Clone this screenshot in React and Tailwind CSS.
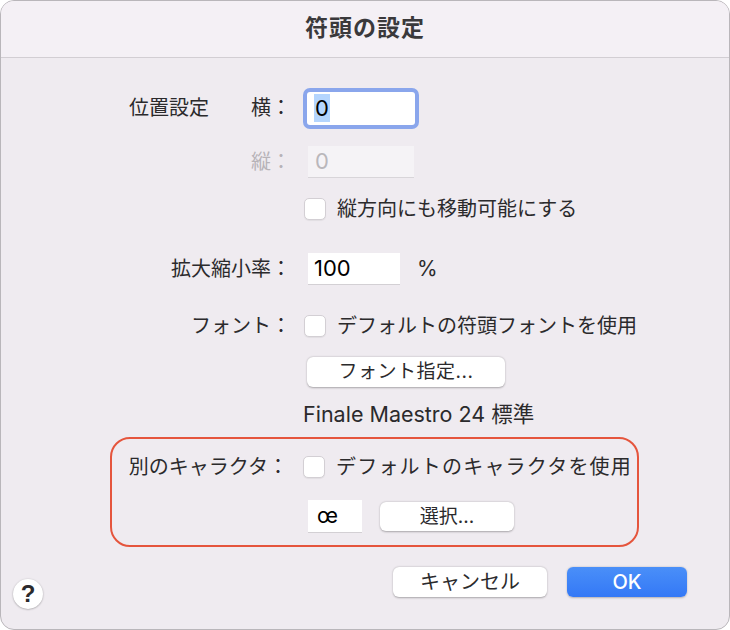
import React from 'react';

const font = { fontFamily: '"Inter", "Noto Sans CJK JP", sans-serif' };

function Checkbox() {
  return (
    <div className="w-[22px] h-[22px] rounded-[5px] bg-white border border-[#d3cfd4] shadow-[0_1px_1px_rgba(0,0,0,0.06)] shrink-0" />
  );
}

function Label({ children, className = '' }) {
  return <div className={`text-right text-[20px] leading-6 ${className}`}>{children}</div>;
}

export default function App() {
  return (
    <div className="w-[730px] h-[630px] bg-white text-[#2b2a2c]" style={font}>
      <div className="w-full h-full rounded-[14px] border border-[#b9b6ba] bg-[#efebf0] overflow-hidden flex flex-col">
        {/* title bar */}
        <div className="h-[57px] shrink-0 bg-[#f4f0f5] border-b border-[#d2ced3] flex items-center justify-center">
          <span className="text-[23px] font-bold text-[#3a393b] tracking-[1px] -mt-[2px]">符頭の設定</span>
        </div>

        <div className="flex flex-col">
          {/* 横 */}
          <div className="flex items-center h-[42px] mt-[29px]">
            <div className="w-[303px] pl-[128px] pr-[13px] flex justify-between text-[20px] leading-6">
              <span>位置設定</span>
              <span>横：</span>
            </div>
            <div className="ml-[3px] w-[108px] h-[33px] bg-white rounded-[3px] ring-[4px] ring-[#8aa6ec] flex items-center pl-[7px]">
              <span className="bg-[#b4d5fe] text-[22px] leading-[28px] px-[1px] text-black">0</span>
            </div>
          </div>

          {/* 縦 */}
          <div className="flex items-center h-[32px] mt-[17px]">
            <Label className="w-[303px] pr-[13px] text-[#b7b3b8]">縦：</Label>
            <div className="ml-[4px] w-[106px] h-[32px] bg-[#f5f3f6] border-b border-[#d8d5d9] flex items-center pl-[7px] text-[22px] text-[#bab7bb]">0</div>
          </div>

          {/* checkbox */}
          <div className="flex items-center h-[24px] mt-[19px]">
            <div className="w-[303px]" />
            <Checkbox />
            <span className="ml-[11px] text-[20px] leading-6">縦方向にも移動可能にする</span>
          </div>

          {/* scale */}
          <div className="flex items-center h-[32px] mt-[32px]">
            <Label className="w-[303px] pr-[13px]">拡大縮小率：</Label>
            <div className="ml-[4px] w-[92px] h-[32px] bg-white border-b border-[#d3d0d4] flex items-center pl-[6px] text-[22px] text-black">100</div>
            <span className="ml-[17px] text-[21px]">%</span>
          </div>

          {/* font */}
          <div className="flex items-center h-[24px] mt-[29px]">
            <Label className="w-[303px] pr-[13px]">フォント：</Label>
            <Checkbox />
            <span className="ml-[11px] text-[20px] leading-6">デフォルトの符頭フォントを使用</span>
          </div>

          <div className="flex mt-[19px]">
            <div className="w-[306px]" />
            <button className="w-[198px] h-[30px] bg-white rounded-[6px] shadow-[0_0.5px_2px_rgba(0,0,0,0.3)] text-[19px] leading-6 text-[#2b2a2c] tracking-[0.5px]">
              フォント指定...
            </button>
          </div>

          <div className="flex mt-[15px] h-[24px] items-center">
            <div className="w-[302px]" />
            <span className="text-[21.5px] leading-6">Finale Maestro 24 標準</span>
          </div>

          {/* highlighted group */}
          <div className="ml-[109px] mt-[11px] w-[529px] h-[110px] rounded-[20px] border-2 border-[#e5553d] flex flex-col">
            <div className="flex items-center h-[24px] mt-[16px]">
              <Label className="w-[191px] pr-[15px]">別のキャラクタ：</Label>
              <Checkbox />
              <span className="ml-[11px] text-[20px] leading-6 tracking-[1.2px]">デフォルトのキャラクタを使用</span>
            </div>
            <div className="flex items-center mt-[21px]">
              <div className="w-[196px]" />
              <div className="w-[54px] h-[33px] bg-white border-b border-[#d3d0d4] flex items-center pl-[9px] text-[21px] text-black">œ</div>
              <button className="ml-[18px] w-[134px] h-[29px] bg-white rounded-[6px] shadow-[0_0.5px_2px_rgba(0,0,0,0.3)] text-[19px] leading-6 text-[#2b2a2c]">
                選択...
              </button>
            </div>
          </div>

          {/* bottom buttons */}
          <div className="flex items-start mt-[20px] pl-[12px] pr-[42px]">
            <div className="mt-[12px] w-[30px] h-[30px] rounded-full bg-white shadow-[0_0.5px_2px_rgba(0,0,0,0.35)] flex items-center justify-center text-[24px] font-bold text-[#2b2a2c]" style={{ fontFamily: '"Liberation Sans", sans-serif' }}>
              ?
            </div>
            <div className="flex-1" />
            <button className="w-[154px] h-[30px] bg-white rounded-[6px] shadow-[0_0.5px_2px_rgba(0,0,0,0.3)] text-[20px] leading-6 text-[#2b2a2c]">
              キャンセル
            </button>
            <button className="ml-[20px] w-[120px] h-[30px] rounded-[6px] bg-gradient-to-b from-[#4a8ff8] to-[#3478f6] shadow-[0_0.5px_2px_rgba(0,0,0,0.25)] text-[20px] leading-6 text-white font-medium">
              OK
            </button>
          </div>
        </div>
      </div>
    </div>
  );
}
